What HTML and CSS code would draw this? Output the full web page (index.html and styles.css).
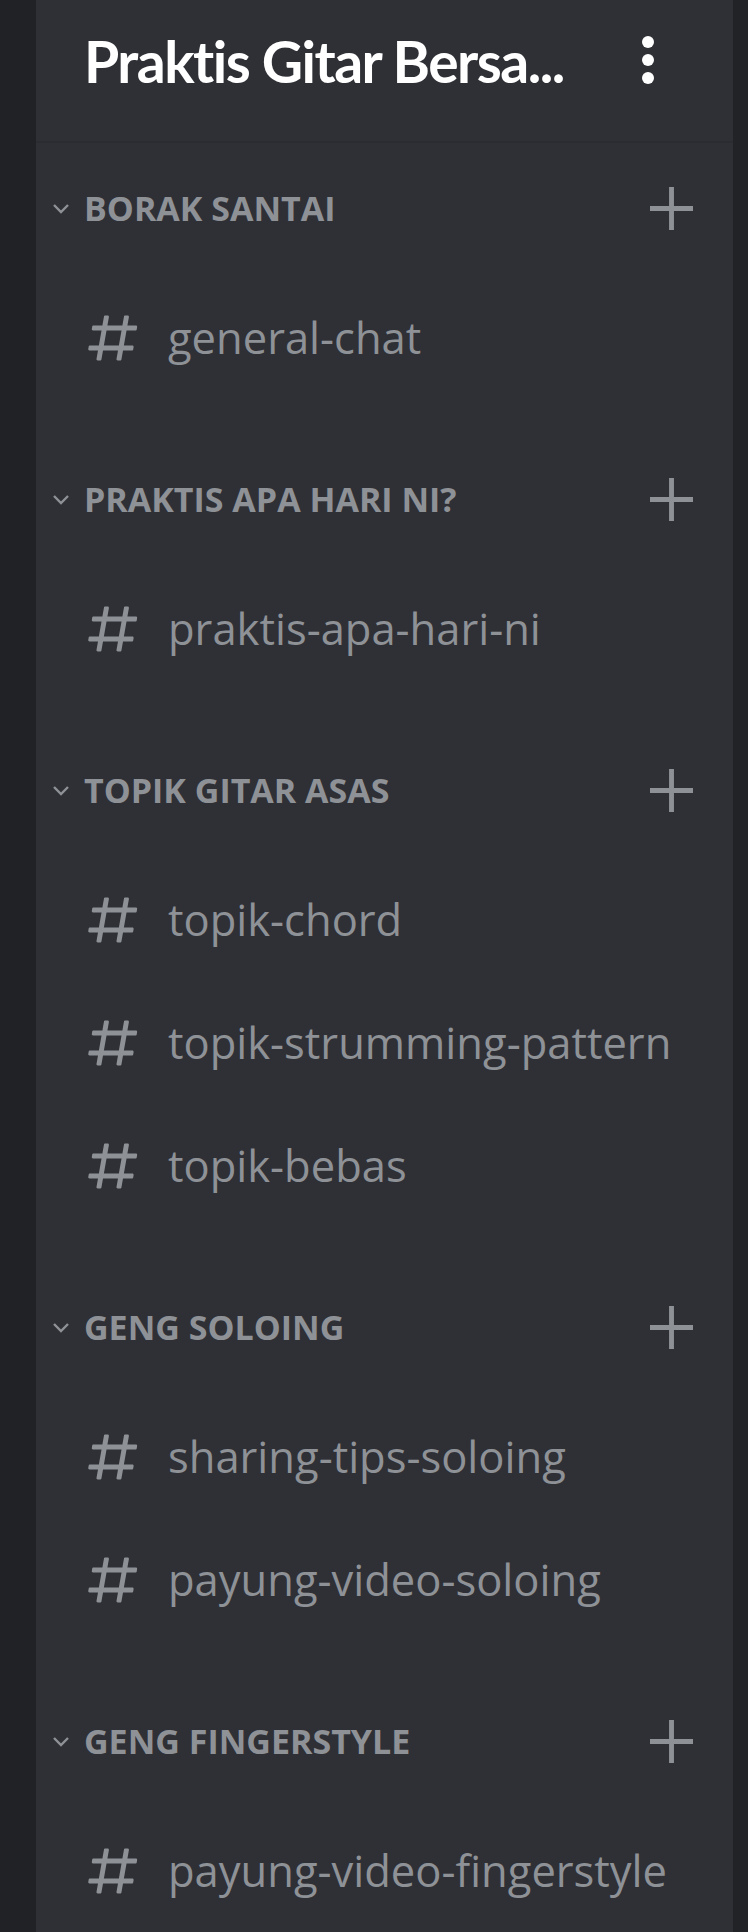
FILE: index.html
```html
<!DOCTYPE html>
<html lang="ms">
<head>
<meta charset="utf-8">
<title>Praktis Gitar Bersama</title>
<link rel="stylesheet" href="styles.css">
</head>
<body>
<div class="app">
  <div class="guild-rail"></div>
  <div class="panel">
    <header class="panel-header">
      <h1 class="server-name">Praktis Gitar Bersa...</h1>
      <div class="kebab"><span></span><span></span><span></span></div>
    </header>
    <div class="channel-list">
      <section class="category">
        <div class="cat-row">
          <svg class="chev" viewBox="0 0 18 11"><path d="M2 2 L9 9 L16 2" fill="none" stroke="currentColor" stroke-width="2.4"/></svg>
          <span class="cat-name">BORAK SANTAI</span>
          <svg class="plus" viewBox="0 0 44 44"><path d="M22 0V44M0 22H44" stroke="currentColor" stroke-width="5"/></svg>
        </div>
        <ul class="channels">
          <li class="channel"><svg class="hash" viewBox="0 0 24 24"><use href="#h"/></svg><span class="ch-name">general-chat</span></li>
        </ul>
      </section>
      <section class="category">
        <div class="cat-row">
          <svg class="chev" viewBox="0 0 18 11"><path d="M2 2 L9 9 L16 2" fill="none" stroke="currentColor" stroke-width="2.4"/></svg>
          <span class="cat-name">PRAKTIS APA HARI NI?</span>
          <svg class="plus" viewBox="0 0 44 44"><path d="M22 0V44M0 22H44" stroke="currentColor" stroke-width="5"/></svg>
        </div>
        <ul class="channels">
          <li class="channel"><svg class="hash" viewBox="0 0 24 24"><use href="#h"/></svg><span class="ch-name">praktis-apa-hari-ni</span></li>
        </ul>
      </section>
      <section class="category">
        <div class="cat-row">
          <svg class="chev" viewBox="0 0 18 11"><path d="M2 2 L9 9 L16 2" fill="none" stroke="currentColor" stroke-width="2.4"/></svg>
          <span class="cat-name">TOPIK GITAR ASAS</span>
          <svg class="plus" viewBox="0 0 44 44"><path d="M22 0V44M0 22H44" stroke="currentColor" stroke-width="5"/></svg>
        </div>
        <ul class="channels">
          <li class="channel"><svg class="hash" viewBox="0 0 24 24"><use href="#h"/></svg><span class="ch-name">topik-chord</span></li>
          <li class="channel"><svg class="hash" viewBox="0 0 24 24"><use href="#h"/></svg><span class="ch-name">topik-strumming-pattern</span></li>
          <li class="channel"><svg class="hash" viewBox="0 0 24 24"><use href="#h"/></svg><span class="ch-name">topik-bebas</span></li>
        </ul>
      </section>
      <section class="category">
        <div class="cat-row">
          <svg class="chev" viewBox="0 0 18 11"><path d="M2 2 L9 9 L16 2" fill="none" stroke="currentColor" stroke-width="2.4"/></svg>
          <span class="cat-name">GENG SOLOING</span>
          <svg class="plus" viewBox="0 0 44 44"><path d="M22 0V44M0 22H44" stroke="currentColor" stroke-width="5"/></svg>
        </div>
        <ul class="channels">
          <li class="channel"><svg class="hash" viewBox="0 0 24 24"><use href="#h"/></svg><span class="ch-name">sharing-tips-soloing</span></li>
          <li class="channel"><svg class="hash" viewBox="0 0 24 24"><use href="#h"/></svg><span class="ch-name">payung-video-soloing</span></li>
        </ul>
      </section>
      <section class="category">
        <div class="cat-row">
          <svg class="chev" viewBox="0 0 18 11"><path d="M2 2 L9 9 L16 2" fill="none" stroke="currentColor" stroke-width="2.4"/></svg>
          <span class="cat-name">GENG FINGERSTYLE</span>
          <svg class="plus" viewBox="0 0 44 44"><path d="M22 0V44M0 22H44" stroke="currentColor" stroke-width="5"/></svg>
        </div>
        <ul class="channels">
          <li class="channel"><svg class="hash" viewBox="0 0 24 24"><use href="#h"/></svg><span class="ch-name">payung-video-fingerstyle</span></li>
        </ul>
      </section>
    </div>
  </div>
  <div class="edge"></div>
</div>
<svg class="defs" width="0" height="0"><defs><path id="h" fill="currentColor" d="M5.88657 21C5.57547 21 5.3399 20.7189 5.39427 20.4126L6.00001 17H2.59511C2.28449 17 2.04905 16.7198 2.10259 16.4138L2.27759 15.4138C2.31946 15.1746 2.52722 15 2.77011 15H6.35001L7.41001 9H4.00511C3.69449 9 3.45905 8.71977 3.51259 8.41381L3.68759 7.41381C3.72946 7.17456 3.93722 7 4.18011 7H7.76001L8.39677 3.41262C8.43914 3.17391 8.64664 3 8.88907 3H9.87344C10.1845 3 10.4201 3.28107 10.3657 3.58738L9.76001 7H15.76L16.3968 3.41262C16.4391 3.17391 16.6466 3 16.8891 3H17.8734C18.1845 3 18.4201 3.28107 18.3657 3.58738L17.76 7H21.1649C21.4755 7 21.711 7.28023 21.6574 7.58619L21.4824 8.58619C21.4406 8.82544 21.2328 9 20.9899 9H17.41L16.35 15H19.7549C20.0655 15 20.301 15.2802 20.2474 15.5862L20.0724 16.5862C20.0306 16.8254 19.8228 17 19.5799 17H16L15.3632 20.5874C15.3209 20.8261 15.1134 21 14.8709 21H13.8866C13.5755 21 13.3399 20.7189 13.3943 20.4126L14 17H8.00001L7.36325 20.5874C7.32088 20.8261 7.11337 21 6.87094 21H5.88657ZM9.41045 9L8.35045 15H14.3504L15.4104 9H9.41045Z"/></defs></svg>
</body>
</html>
```
FILE: styles.css
```css
html, body {
  margin: 0;
  padding: 0;
  background: #202225;
}
body {
  font-family: "Open Sans", "Noto Sans", sans-serif;
  width: 748px;
  height: 1932px;
  overflow: hidden;
}
.app {
  display: flex;
  height: 1932px;
}
.guild-rail {
  width: 36px;
  flex: none;
  background: #202226;
}
.edge {
  width: 15px;
  flex: none;
  background: #222327;
}
.panel {
  flex: 1;
  background: #2f3036;
  display: flex;
  flex-direction: column;
  min-width: 0;
}
.panel-header {
  height: 142px;
  border-bottom: 2px solid #2b2c32;
  display: flex;
  align-items: flex-start;
  padding-left: 48px;
  padding-right: 79px;
}
.server-name {
  margin: 0;
  margin-top: 27px;
  flex: 1;
  font-family: Lato, "Open Sans", sans-serif;
  font-size: 57px;
  line-height: 68px;
  font-weight: 700;
  color: #ffffff;
  letter-spacing: -1.5px;
  white-space: nowrap;
}
.kebab {
  display: flex;
  flex-direction: column;
  gap: 6px;
  margin-top: 36px;
}
.kebab span {
  width: 12px;
  height: 12px;
  border-radius: 50%;
  background: #ffffff;
}
.channel-list {
  display: flex;
  flex-direction: column;
}
.category {
  padding-top: 33px;
}
.category + .category {
  padding-top: 68px;
}
.cat-row {
  height: 64px;
  display: flex;
  align-items: center;
  padding-left: 16px;
  padding-right: 40px;
  color: #8e9297;
}
.chev {
  width: 18px;
  height: 11px;
  margin-right: 14px;
  flex: none;
}
.cat-name {
  flex: 1;
  font-size: 34px;
  font-weight: 700;
  letter-spacing: 0;
  white-space: nowrap;
}
.plus {
  width: 43px;
  height: 43px;
  flex: none;
}
.channels {
  list-style: none;
  margin: 0;
  padding: 36px 0 0 0;
}
.channel {
  height: 123px;
  display: flex;
  align-items: center;
  padding-left: 47px;
  color: #8e9297;
}
.hash {
  width: 60px;
  height: 60px;
  flex: none;
  margin-right: 25px;
}
.ch-name {
  font-size: 43.5px;
  white-space: nowrap;
}
.defs {
  position: absolute;
}
```
